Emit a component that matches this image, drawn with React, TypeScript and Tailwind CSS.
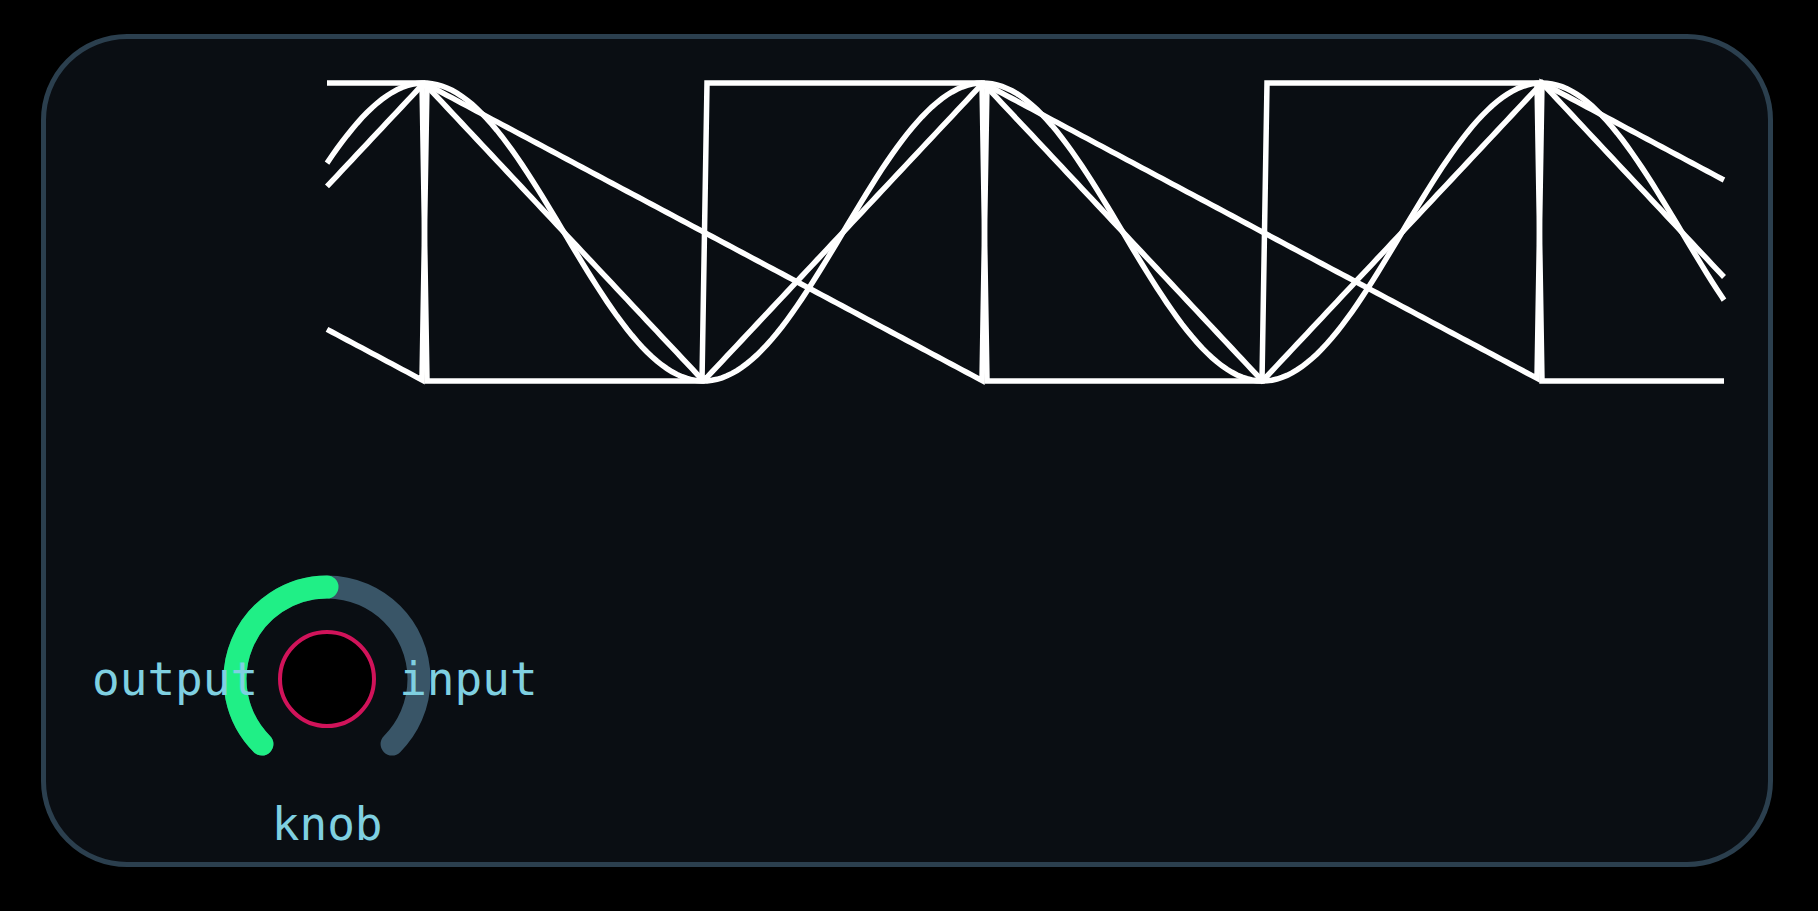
import React from 'react';

const WAVE_W = 1397;
const WAVE_H = 298;
const PERIOD = 559;
const PEAK_OFFSET = 97;
const STEP = 5;

type WaveFn = (t: number) => number;

const frac = (v: number) => v - Math.floor(v);

const waves: Record<string, WaveFn> = {
  sine: (t) => Math.cos(2 * Math.PI * t),
  square: (t) => (frac(t) < 0.5 ? -1 : 1),
  triangle: (t) => 1 - 4 * Math.abs(frac(t + 0.5) - 0.5),
  saw: (t) => 1 - 2 * frac(t),
};

function buildPoints(fn: WaveFn) {
  const pts: string[] = [];
  const xs: number[] = [];
  for (let x = 0; x <= WAVE_W; x += STEP) xs.push(x);
  if (xs[xs.length - 1] !== WAVE_W) xs.push(WAVE_W);
  xs.forEach((x) => {
    const t = (x - PEAK_OFFSET) / PERIOD;
    const y = WAVE_H / 2 - (WAVE_H / 2) * fn(t);
    pts.push(`${x.toFixed(1)},${y.toFixed(1)}`);
  });
  return pts.join(' ');
}

function Oscilloscope() {
  return (
    <svg
      width={WAVE_W}
      height={WAVE_H}
      viewBox={`0 0 ${WAVE_W} ${WAVE_H}`}
      className="ml-[281px] mt-[44px] block overflow-visible"
    >
      {Object.entries(waves).map(([name, fn]) => (
        <polyline
          key={name}
          points={buildPoints(fn)}
          fill="none"
          stroke="#ffffff"
          strokeWidth={5.5}
          strokeLinejoin="miter"
        />
      ))}
    </svg>
  );
}

interface KnobProps {
  label: string;
  value: number; // 0..1
}

function polar(cx: number, cy: number, r: number, deg: number) {
  const a = (deg * Math.PI) / 180;
  return { x: cx + r * Math.sin(a), y: cy - r * Math.cos(a) };
}

function Knob({ label, value }: KnobProps) {
  const c = 110;
  const r = 92;
  const start = polar(c, c, r, -135);
  const end = polar(c, c, r, 135);
  const valDeg = -135 + 270 * value;
  const valPt = polar(c, c, r, valDeg);
  const large = valDeg - -135 > 180 ? 1 : 0;

  return (
    <div className="ml-[46px] mt-[188px] flex items-start font-['DejaVu_Sans_Mono',monospace] text-[46px] leading-none text-[#7fd0e1]">
      <span className="relative z-10 mt-[87px]">output</span>
      <div className="-ml-[41px] -mr-[38px] flex flex-col items-center">
        <svg width="220" height="220" viewBox="0 0 220 220" className="block overflow-visible">
          <path
            d={`M ${start.x} ${start.y} A ${r} ${r} 0 1 1 ${end.x} ${end.y}`}
            fill="none"
            stroke="#395567"
            strokeWidth={23}
            strokeLinecap="round"
          />
          <path
            d={`M ${start.x} ${start.y} A ${r} ${r} 0 ${large} 1 ${valPt.x} ${valPt.y}`}
            fill="none"
            stroke="#20ef86"
            strokeWidth={23}
            strokeLinecap="round"
          />
          <circle cx={c} cy={c} r={47} fill="#000000" stroke="#d1135a" strokeWidth={4} />
        </svg>
        <span className="mt-[12px]">{label}</span>
      </div>
      <span className="relative z-10 mt-[87px]">input</span>
    </div>
  );
}

export default function App() {
  return (
    <div className="min-h-screen bg-black pl-[41px] pt-[34px]">
      <div className="h-[833px] w-[1732px] overflow-hidden rounded-[86px] border-[5px] border-[#2b3f4e] bg-[#0a0e13]">
        <Oscilloscope />
        <Knob label="knob" value={0.5} />
      </div>
    </div>
  );
}
